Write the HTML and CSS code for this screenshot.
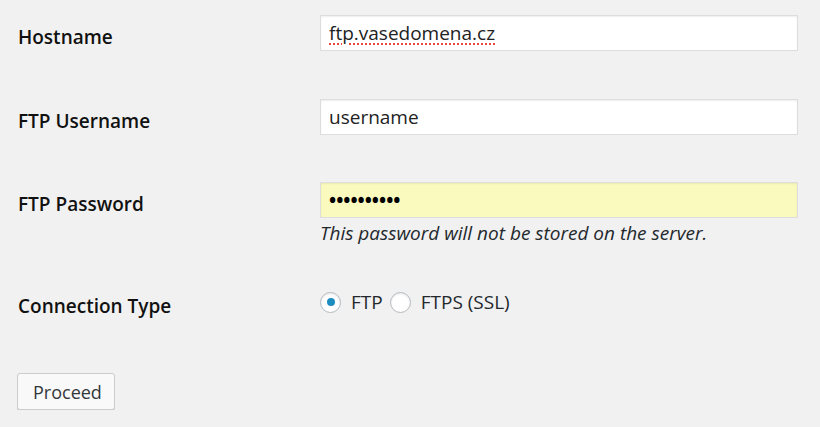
FILE: index.html
```html
<!DOCTYPE html>
<html lang="cs">
<head>
<meta charset="utf-8">
<title>FTP</title>
<link rel="stylesheet" href="styles.css">
</head>
<body>
<form class="form">
  <div class="row row-host">
    <label class="label" for="hostname">Hostname</label>
    <div class="field"><input class="input spell" id="hostname" type="text" value="ftp.vasedomena.cz"></div>
  </div>
  <div class="row row-user">
    <label class="label" for="username">FTP Username</label>
    <div class="field"><input class="input" id="username" type="text" value="username"></div>
  </div>
  <div class="row row-pass">
    <label class="label" for="password">FTP Password</label>
    <div class="field">
      <input class="input input-autofill" id="password" type="password" value="heslo12345">
      <p class="desc">This password will not be stored on the server.</p>
    </div>
  </div>
  <div class="row row-type">
    <span class="label">Connection Type</span>
    <div class="field radios">
      <label class="radio-label"><input class="radio" type="radio" name="ct" checked>FTP</label>
      <label class="radio-label"><input class="radio" type="radio" name="ct">FTPS (SSL)</label>
    </div>
  </div>
  <div class="actions">
    <button class="button" type="button">Proceed</button>
  </div>
</form>
</body>
</html>
```

FILE: styles.css
```css
html, body {
  margin: 0;
  padding: 0;
  background: #f1f1f1;
}
body {
  font-family: "Open Sans", "DejaVu Sans", sans-serif;
  color: #23282d;
}
.form {
  padding: 15px 22px 0 18px;
}
.row {
  display: grid;
  grid-template-columns: 302px 478px;
  align-items: start;
}
.row-host { margin-bottom: 48px; }
.row-user { margin-bottom: 47px; }
.row-pass { margin-bottom: 43px; }
.row-type { margin-bottom: 58px; }
.label {
  font-size: 19px;
  font-weight: 600;
  line-height: 36px;
  padding-top: 4px;
  margin-bottom: -4px;
  color: #111;
}
.row-type .label {
  line-height: 26px;
}
.input {
  display: block;
  box-sizing: border-box;
  width: 478px;
  height: 36px;
  margin: 0;
  padding: 0 8px;
  border: 1px solid #dddddd;
  background: #fff;
  box-shadow: inset 0 1px 2px rgba(0,0,0,0.07);
  font-family: "Open Sans", "DejaVu Sans", sans-serif;
  font-size: 19px;
  color: #222;
  outline: none;
}
.spell {
  text-decoration: underline dotted #e8453c;
  text-decoration-thickness: 2px;
  text-underline-offset: 3px;
}
.input-autofill {
  background: #fafabe;
  font-size: 19px;
  font-weight: 700;
  letter-spacing: 0;
  color: #000;
}
.desc {
  margin: 2px 0 0;
  font-size: 19px;
  font-style: italic;
  line-height: 26px;
  color: #23282d;
}
.radios {
  display: flex;
  align-items: center;
  height: 26px;
}
.radio-label {
  display: flex;
  align-items: center;
  font-size: 19px;
  color: #23282d;
  margin-right: 7px;
}
.radio {
  appearance: none;
  -webkit-appearance: none;
  box-sizing: border-box;
  width: 21px;
  height: 21px;
  margin: 0 10px 0 0;
  border: 1px solid #b4b9be;
  border-radius: 50%;
  background: #fff;
  box-shadow: inset 0 1px 2px rgba(0,0,0,0.1);
  display: grid;
  place-items: center;
}
.radio:checked::before {
  content: "";
  width: 8px;
  height: 8px;
  border-radius: 50%;
  background: #1e8cbe;
}
.button {
  box-sizing: border-box;
  height: 37px;
  width: 98px;
  margin-left: -1px;
  padding: 0 15px;
  border: 1px solid #cccccc;
  border-radius: 3px;
  background: #f9f9f9;
  box-shadow: 0 1px 0 #cccccc;
  font-family: "Open Sans", "DejaVu Sans", sans-serif;
  font-size: 18px;
  color: #32373c;
}
```
